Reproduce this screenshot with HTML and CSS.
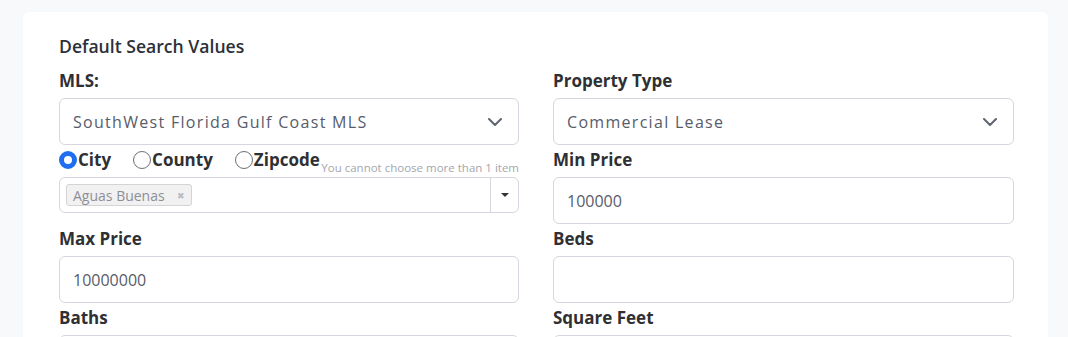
FILE: index.html
```html
<!DOCTYPE html>
<html lang="en">
<head>
    <meta charset="UTF-8">
    <meta name="viewport" content="width=device-width, initial-scale=1.0">
    <title>Default Search Values</title>
    <link rel="stylesheet" href="styles.css">
</head>
<body>

    <div class="card">
        <h5 class="card-title">Default Search Values</h5>

        <div class="form-grid">
            <div class="form-group">
                <label class="field-label">MLS:</label>
                <div class="select-box">
                    <span class="select-value">SouthWest Florida Gulf Coast MLS</span>
                    <svg class="chevron" width="14" height="8" viewBox="0 0 14 8"><path d="M1 1l6 6 6-6" fill="none" stroke="#5f6470" stroke-width="2" stroke-linecap="round" stroke-linejoin="round"/></svg>
                </div>
            </div>

            <div class="form-group">
                <label class="field-label">Property Type</label>
                <div class="select-box">
                    <span class="select-value">Commercial Lease</span>
                    <svg class="chevron" width="14" height="8" viewBox="0 0 14 8"><path d="M1 1l6 6 6-6" fill="none" stroke="#5f6470" stroke-width="2" stroke-linecap="round" stroke-linejoin="round"/></svg>
                </div>
            </div>

            <div class="form-group">
                <div class="radio-row">
                    <label class="radio"><span class="dot checked"></span>City</label>
                    <label class="radio"><span class="dot"></span>County</label>
                    <label class="radio"><span class="dot"></span>Zipcode</label>
                    <span class="limit-note">You cannot choose more than 1 item</span>
                </div>
                <div class="multi-select">
                    <div class="tags">
                        <span class="tag">Aguas Buenas <span class="tag-x">&#10006;</span></span>
                    </div>
                    <div class="multi-toggle"><span class="caret"></span></div>
                </div>
            </div>

            <div class="form-group">
                <label class="field-label">Min Price</label>
                <div class="text-input">100000</div>
            </div>

            <div class="form-group">
                <label class="field-label">Max Price</label>
                <div class="text-input">10000000</div>
            </div>

            <div class="form-group">
                <label class="field-label">Beds</label>
                <div class="text-input"></div>
            </div>

            <div class="form-group">
                <label class="field-label">Baths</label>
                <div class="text-input"></div>
            </div>

            <div class="form-group">
                <label class="field-label">Square Feet</label>
                <div class="text-input"></div>
            </div>
        </div>
    </div>

</body>
</html>
```

FILE: styles.css
```css
body {
    margin: 0;
    background: #f8f9fb;
    font-family: "Open Sans", "Noto Sans", sans-serif;
    color: #2f3033;
    overflow: hidden;
}

.card {
    background: #fff;
    margin: 12px 20px 0 23px;
    border-radius: 6px;
    padding: 22px 35px 40px 36px;
    min-height: 400px;
}

.card-title {
    margin: 0 0 10px 0;
    font-size: 17.6px;
    font-weight: 600;
    line-height: 24px;
    color: #2c3038;
}

.form-grid {
    display: grid;
    grid-template-columns: 460px 461px;
    column-gap: 34px;
    align-items: start;
}

.form-group {
    height: 79px;
}

.field-label {
    display: block;
    font-size: 17px;
    font-weight: 700;
    line-height: 24px;
    padding-top: 1px;
    margin-bottom: 5px;
    color: #2f3033;
}

.select-box,
.text-input {
    box-sizing: border-box;
    height: 47px;
    border: 1px solid #d5d6de;
    border-radius: 6px;
    padding: 0 13px;
    display: flex;
    align-items: center;
    font-size: 16px;
    color: #575c6b;
}

.select-box {
    justify-content: space-between;
}

.select-value {
    letter-spacing: 1.3px;
}

.chevron {
    margin-right: 3px;
}

.radio-row {
    display: flex;
    align-items: flex-end;
    height: 25px;
    margin-bottom: 5px;
}

.radio {
    display: flex;
    align-items: center;
    font-size: 17px;
    font-weight: 700;
    margin-right: 22px;
    line-height: 24px;
}

.radio:nth-child(3) {
    margin-right: 0;
}

.dot {
    box-sizing: border-box;
    width: 18px;
    height: 18px;
    border: 1px solid #6d6f75;
    border-radius: 50%;
    margin-right: 1px;
}

.dot.checked {
    border: 5px solid #1f6ef0;
    background: #fff;
}

.limit-note {
    margin-left: auto;
    font-size: 11.5px;
    color: #a4a6ad;
    line-height: 14px;
    margin-bottom: -3px;
}

.multi-select {
    box-sizing: border-box;
    height: 36px;
    border: 1px solid #d5d6de;
    border-radius: 6px;
    display: flex;
}

.tags {
    flex: 1;
    display: flex;
    align-items: center;
    padding-left: 6px;
}

.tag {
    display: flex;
    align-items: center;
    height: 20px;
    padding: 0 6px;
    background: #f1f1f2;
    border: 1px solid #d4d4d6;
    border-radius: 3px;
    font-size: 14px;
    color: #8d8f96;
}

.tag-x {
    font-size: 9px;
    color: #b9bbc0;
    margin-left: 12px;
}

.multi-toggle {
    width: 27px;
    border-left: 1px solid #d5d6de;
    display: flex;
    align-items: center;
    justify-content: center;
}

.caret {
    width: 0;
    height: 0;
    border-left: 4px solid transparent;
    border-right: 4px solid transparent;
    border-top: 4px solid #333;
}
```
